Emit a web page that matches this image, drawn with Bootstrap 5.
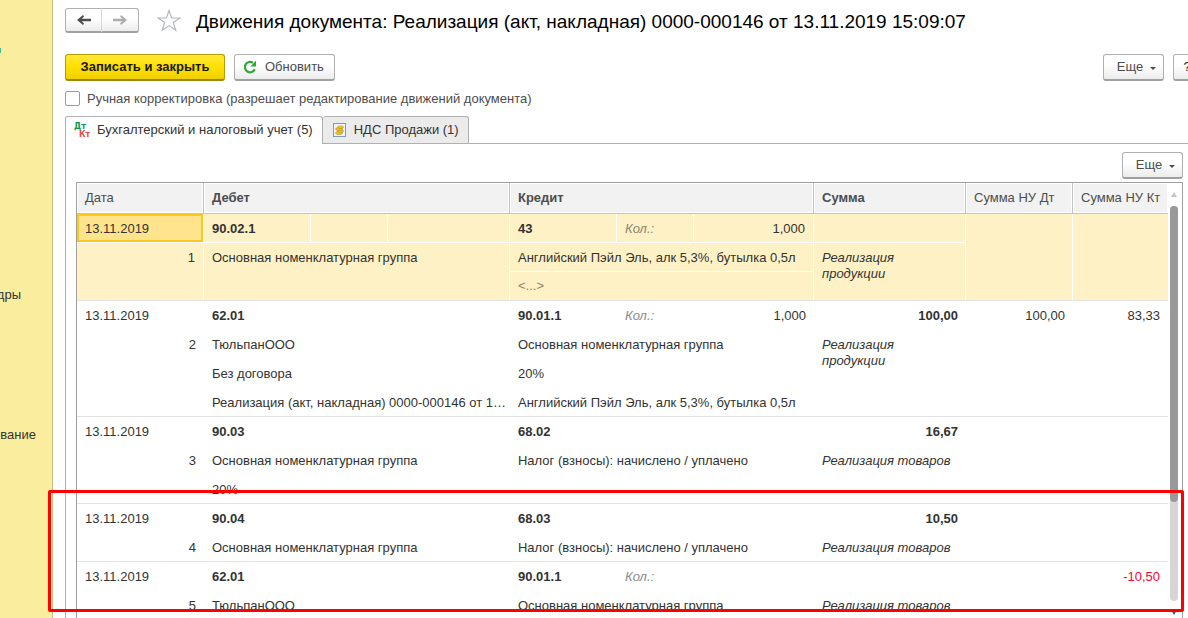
<!DOCTYPE html>
<html lang="ru">
<head>
<meta charset="utf-8">
<meta name="viewport" content="width=device-width, initial-scale=1">
<title>Движения документа</title>
<link href="https://cdn.jsdelivr.net/npm/bootstrap@5.3.0/dist/css/bootstrap.min.css" rel="stylesheet">
<style>
body { font-family: "Liberation Sans", Arial, sans-serif; font-size: 13px; line-height: 16px; color: #333; }
.app { height: 100vh; min-height: 480px; }
/* sections panel */
.sections { width: 53px; background: #fbed9e; border-right: 1px solid #c9be7e; padding-top: 48px; }
.sections a { display: flex; justify-content: flex-end; height: 16px; color: #333; text-decoration: none; }
.sec-dot { width: 1px; height: 5px; background: #3fc08a; }
.sec-staff { width: 21px; margin-top: 234px; }
.sec-admin { width: 36px; margin-top: 124px; }
.workspace { min-width: 0; padding: 8px 0 0 12px; }
/* buttons */
.btn-std { height: 27px; padding: 0 13px; font-size: 13px; line-height: 24px; color: #4d4d4d; border: 1px solid #b0b0b0; border-bottom: 2px solid #a0a0a0; border-radius: 3px; background: linear-gradient(#fff 40%, #ececec); white-space: nowrap; }
.btn-std:hover { background: #f5f5f5; color: #333; border-color: #a0a0a0; }
.btn-save { width: 160px; color: #1a1a00; font-weight: 700; padding: 0; border-color: #b39b00; border-bottom-color: #9c8700; background: linear-gradient(#ffe838, #ffe000 50%, #f0cf00); }
.btn-reload { width: 101px; padding: 0 0 0 8px; }
.btn-more { width: 61px; padding: 0 6px 0 12px; }
.btn-more::after { margin-left: 7px; border-top-width: 3px; border-left-width: 3px; border-right-width: 3px; vertical-align: 1px; }
.btn-help { width: 28px; padding: 0; color: #222; }
.toolbar { width: calc(100% + 13px); margin-top: 18px; }
.toolbar .btn-reload, .toolbar .btn-help { margin-left: 9px; }
.history .btn-std { width: 37px; height: 25px; padding: 0; line-height: 0; }
.history .btn-std + .btn-std { width: 38px; border-left-color: #d8d8d8; }
.star { margin: 0 15px 0 18px; }
.doc-title { font-size: 19px; line-height: 28px; font-weight: 400; color: #000; white-space: nowrap; }
.manual { margin-top: 9px; height: 17px; color: #4d4d4d; }
.manual .form-check-input { width: 15px; height: 15px; margin: 0; border: 1px solid #999; border-radius: 2px; }
.manual label { margin-left: 7px; }
/* tabs */
.doc-tabs { margin-top: 9px; border: 0; position: relative; z-index: 1; }
.doc-tabs .nav-link { height: 27px; padding: 0 9px 0 8px; color: #333; border: 1px solid #b0b0b0; border-bottom: 0; border-radius: 3px 3px 0 0; background: #ebebeb; margin: 0; }
.doc-tabs .nav-link.active { height: 28px; margin-bottom: -1px; padding-bottom: 2px; background: #fff; border-color: #b0b0b0; color: #333; }
.doc-tabs .nav-link svg { margin-right: 7px; }
.doc-tabs li + li .nav-link { border-left: 0; padding-left: 10px; }
.tab-area { border-top: 1px solid #b0b0b0; border-left: 1px solid #b0b0b0; padding: 8px 5px 0 10px; min-height: 0; }
/* register grid */
.grid-box { border: 1px solid #a0a0a0; border-bottom: 0; margin-top: 3px; min-height: 0; }
.grid-view { min-width: 0; overflow: hidden; margin-bottom: 8px; }
.moves { width: 100%; table-layout: fixed; border-collapse: separate; border-spacing: 0; }
.moves th, .moves td { height: 29px; padding: 1px 8px 0; white-space: nowrap; overflow: hidden; vertical-align: middle; }
.moves th { height: 31px; padding: 0 0 0 8px; background: #f2f2f2; color: #4d4d4d; font-weight: 400; border-bottom: 1px solid #c4c4c4; border-right: 1px solid #c4c4c4; box-shadow: inset 0 0 0 1px #fff; }
.moves th:last-child { border-right: 0; }
.moves th.main-col, .moves .acc, .moves .total { font-weight: 700; }
.moves tbody tr:last-child td, .moves td.to-end { border-bottom: 1px solid #e2e2e2; }
.moves td.to-end { vertical-align: top; padding-top: 7px; }
.moves tbody tr:last-child td.to-end { padding-top: 6px; }
.moves td.note { font-style: italic; white-space: normal; padding-right: 40px; }
.moves td.note-wide { padding-right: 8px; }
.moves td.long { padding-right: 0; }
.moves .qty { font-style: italic; color: #8a8a8a; }
.moves .minus { color: #f03; }
.moves .selected td { background: #fef1c5; border-right: 1px solid #fff; border-bottom: 1px solid #fff; }
.moves .selected td.to-end { border-bottom-color: #e2e2e2; }
.moves .selected td.last { border-right: 0; }
.moves .selected td.current { background: #ffe48d; box-shadow: inset 0 0 0 2px #fbc71f; }
.moves .selected .qty { color: #8a8468; }
.vscroll { width: 14px; padding: 9px 3px 3px 2px; }
.vscroll svg { display: block; margin: 0 1px; }
.vtrack { background: #d6d6d6; border-radius: 4px; margin: 9px 0; width: 8px; }
.vthumb { background: #999; border-radius: 4px; }
/* attention frame drawn over rows */
.callout-frame { position: absolute; left: 48px; right: 4px; top: 490px; height: 122px; border: 3px solid #f00; border-radius: 2px; pointer-events: none; z-index: 5; }
</style>
</head>
<body>
<div class="app d-flex overflow-hidden position-relative">
  <nav class="sections flex-shrink-0 overflow-hidden" aria-label="Разделы">
    <div class="sec-dot"></div>
    <a class="sec-staff" href="#">дры</a>
    <a class="sec-admin" href="#">ование</a>
  </nav>

  <main class="workspace flex-grow-1 d-flex flex-column overflow-hidden">
    <header class="d-flex align-items-start">
      <div class="history btn-group">
        <button class="btn btn-std" type="button" aria-label="Назад"><svg width="16" height="12" viewBox="0 0 16 12"><path d="M1 6l6-5 1 1.500L5.800 4.700H15v2.600H5.800L8 9.500 7 11z" fill="#4d4d4d"/></svg></button>
        <button class="btn btn-std" type="button" aria-label="Вперед"><svg width="16" height="12" viewBox="0 0 16 12"><path d="M15 6L9 1 8 2.500l2.200 2.200H1v2.600h9.200L8 9.500 9 11z" fill="#adadad"/></svg></button>
      </div>
      <svg class="star" width="24" height="24" viewBox="0 0 24 24"><path d="m12 2.500 2.600 7.500H23l-6.700 4.600 2.500 7.600L12 17.600l-6.800 4.600 2.500-7.600L1 10h8.400z" fill="#fff" stroke="#b4b9be" stroke-width="1.200"/></svg>
      <h1 class="doc-title m-0">Движения документа: Реализация (акт, накладная) 0000-000146 от 13.11.2019 15:09:07</h1>
    </header>

    <div class="toolbar d-flex flex-shrink-0">
      <button class="btn btn-std btn-save" type="button">Записать и закрыть</button>
      <button class="btn btn-std btn-reload d-flex align-items-center" type="button"><svg class="me-2" width="14" height="14" viewBox="0 0 14 14"><path d="M11.800 9.300A5.200 5.200 0 1 1 10 2.800" fill="none" stroke="#2fa836" stroke-width="2.200"/><path d="M13 .5v6H7.500z" fill="#2fa836"/></svg>Обновить</button>
      <button class="btn btn-std btn-more dropdown-toggle ms-auto" type="button">Еще</button>
      <button class="btn btn-std btn-help" type="button">?</button>
    </div>

    <div class="manual d-flex align-items-end flex-shrink-0">
      <input class="form-check-input align-self-center" type="checkbox" id="manual">
      <label for="manual">Ручная корректировка (разрешает редактирование движений документа)</label>
    </div>

    <ul class="doc-tabs nav nav-tabs flex-shrink-0">
      <li class="nav-item"><a class="nav-link active d-flex align-items-center" href="#"><svg width="16" height="16" viewBox="0 0 16 16" font-family="DejaVu Sans, sans-serif" font-size="8" font-weight="700"><text x="0" y="7" fill="#0a9a50">Дт</text><text x="5" y="15" fill="#e0504c">Кт</text></svg>Бухгалтерский и налоговый учет (5)</a></li>
      <li class="nav-item"><a class="nav-link d-flex align-items-center" href="#"><svg width="14" height="14" viewBox="0 0 14 14"><rect x=".5" y=".5" width="12" height="13" fill="#eef4fa" stroke="#7f9bb3"/><g fill="#f3c435" stroke="#b98a10" stroke-width=".6"><ellipse cx="6" cy="10" rx="3.500" ry="1.500"/><ellipse cx="7.500" cy="8" rx="3" ry="1.500"/><ellipse cx="6" cy="6" rx="3.500" ry="1.500"/><ellipse cx="7.500" cy="4.200" rx="3" ry="1.300"/></g></svg>НДС Продажи (1)</a></li>
    </ul>

    <section class="tab-area flex-grow-1 d-flex flex-column">
      <button class="btn btn-std btn-more dropdown-toggle align-self-end flex-shrink-0" type="button">Еще</button>
      <div class="grid-box flex-grow-1 d-flex">
        <div class="grid-view flex-grow-1">
          <table class="moves">
            <colgroup>
              <col style="width:127px"><col style="width:107px"><col style="width:77px"><col>
              <col style="width:107px"><col style="width:77px"><col style="width:120px">
              <col style="width:152px"><col style="width:107px"><col style="width:95px">
            </colgroup>
            <thead>
              <tr><th>Дата</th><th class="main-col" colspan="3">Дебет</th><th class="main-col" colspan="3">Кредит</th><th class="main-col">Сумма</th><th>Сумма НУ Дт</th><th>Сумма НУ Кт</th></tr>
            </thead>
            <tbody class="selected">
              <tr><td class="current">13.11.2019</td><td class="acc">90.02.1</td><td></td><td></td><td class="acc">43</td><td class="qty">Кол.:</td><td class="text-end">1,000</td><td></td><td class="to-end" rowspan="3"></td><td class="to-end last" rowspan="3"></td></tr>
              <tr><td class="to-end text-end" rowspan="2">1</td><td class="to-end" colspan="3" rowspan="2">Основная номенклатурная группа</td><td colspan="3">Английский Пэйл Эль, алк 5,3%, бутылка 0,5л</td><td class="to-end note" rowspan="2">Реализация продукции</td></tr>
              <tr><td class="to-end qty fst-normal" colspan="3">&lt;...&gt;</td></tr>
            </tbody>
            <tbody>
              <tr><td>13.11.2019</td><td class="acc" colspan="3">62.01</td><td class="acc">90.01.1</td><td class="qty">Кол.:</td><td class="text-end">1,000</td><td class="total text-end">100,00</td><td class="text-end">100,00</td><td class="text-end">83,33</td></tr>
              <tr><td class="to-end text-end" rowspan="3">2</td><td colspan="3">ТюльпанООО</td><td colspan="3">Основная номенклатурная группа</td><td class="to-end note" rowspan="3">Реализация продукции</td><td class="to-end" colspan="2" rowspan="3"></td></tr>
              <tr><td colspan="3">Без договора</td><td colspan="3">20%</td></tr>
              <tr><td class="long" colspan="3">Реализация (акт, накладная) 0000-000146 от 1…</td><td colspan="3">Английский Пэйл Эль, алк 5,3%, бутылка 0,5л</td></tr>
            </tbody>
            <tbody>
              <tr><td>13.11.2019</td><td class="acc" colspan="3">90.03</td><td class="acc" colspan="3">68.02</td><td class="total text-end">16,67</td><td></td><td></td></tr>
              <tr><td class="to-end text-end" rowspan="2">3</td><td colspan="3">Основная номенклатурная группа</td><td class="to-end" colspan="3" rowspan="2">Налог (взносы): начислено / уплачено</td><td class="to-end note note-wide" rowspan="2">Реализация товаров</td><td class="to-end" colspan="2" rowspan="2"></td></tr>
              <tr><td colspan="3">20%</td></tr>
            </tbody>
            <tbody>
              <tr><td>13.11.2019</td><td class="acc" colspan="3">90.04</td><td class="acc" colspan="3">68.03</td><td class="total text-end">10,50</td><td></td><td></td></tr>
              <tr><td class="text-end">4</td><td colspan="3">Основная номенклатурная группа</td><td colspan="3">Налог (взносы): начислено / уплачено</td><td class="note note-wide">Реализация товаров</td><td colspan="2"></td></tr>
            </tbody>
            <tbody>
              <tr><td>13.11.2019</td><td class="acc" colspan="3">62.01</td><td class="acc">90.01.1</td><td class="qty">Кол.:</td><td></td><td></td><td></td><td class="minus text-end">-10,50</td></tr>
              <tr><td class="text-end">5</td><td colspan="3">ТюльпанООО</td><td colspan="3">Основная номенклатурная группа</td><td class="note note-wide">Реализация товаров</td><td colspan="2"></td></tr>
            </tbody>
          </table>
        </div>
        <div class="vscroll d-flex flex-column flex-shrink-0" aria-hidden="true">
          <svg width="6" height="5" viewBox="0 0 6 5"><path d="M3 0 6 5H0z" fill="#c4c4c4"/></svg>
          <div class="vtrack flex-grow-1"><div class="vthumb" style="height:75%"></div></div>
          <svg width="6" height="5" viewBox="0 0 6 5"><path d="M0 0h6L3 5z" fill="#555"/></svg>
        </div>
      </div>
    </section>
  </main>
  <div class="callout-frame"></div>
</div>
<script src="https://cdn.jsdelivr.net/npm/bootstrap@5.3.0/dist/js/bootstrap.bundle.min.js"></script>
</body>
</html>
